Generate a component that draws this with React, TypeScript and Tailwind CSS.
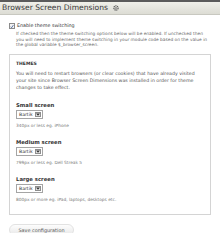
import React from "react";

function ThemeSelect() {
  return (
    <div className="mt-[2px] flex h-[9px] w-[27px] items-stretch border border-[#a5a5a5] bg-white">
      <span className="flex-1 pl-[2px] text-[4.6px] leading-[7px] text-[#333]">Bartik</span>
      <span className="m-[1px] flex w-[6px] items-center justify-center border border-[#8e8e8e] bg-[#e6e6e6]">
        <svg width="4" height="3" viewBox="0 0 4 3">
          <path d="M0 0.5 L4 0.5 L2 2.8 Z" fill="#333" />
        </svg>
      </span>
    </div>
  );
}

function ScreenField({ label, hint }: { label: string; hint: string }) {
  return (
    <div className="mt-[11px] first:mt-[9px]">
      <p className="text-[5.3px] font-bold leading-[6px] text-[#333]">{label}</p>
      <ThemeSelect />
      <p className="mt-[4px] text-[4.3px] leading-[5px] text-[#7a7a7a]">{hint}</p>
    </div>
  );
}

export default function App() {
  return (
    <div className="h-[233px] w-[220px] overflow-hidden bg-white font-['DejaVu_Sans',sans-serif]">
      <header className="flex h-[15px] items-center gap-[5px] border-t-[2px] border-b border-t-[#5b5b5b] border-b-[#c8c8c0] bg-gradient-to-b from-[#f0f0ea] to-[#dcdcd4] pl-[2px]">
        <h1 className="text-[7.6px] leading-[10px] text-[#3a3a3a]">Browser Screen Dimensions</h1>
        <svg width="6" height="6" viewBox="0 0 12 12">
          <circle cx="6" cy="6" r="4.2" fill="none" stroke="#555" strokeWidth="2.4" strokeDasharray="2.2 1.1" />
          <circle cx="6" cy="6" r="1.6" fill="#555" />
        </svg>
      </header>

      <div className="px-[9px] pt-[8px]">
        <label className="flex items-center gap-[2px]">
          <span className="flex h-[6px] w-[6px] items-center justify-center border border-[#8b8b8b] bg-[#f4f4f4]">
            <svg width="5" height="5" viewBox="0 0 10 10">
              <path d="M1.5 5.5 L4 8 L8.5 1.5" fill="none" stroke="#2b4a8a" strokeWidth="1.8" />
            </svg>
          </span>
          <span className="text-[4.8px] leading-[6px] text-[#333]">Enable theme switching</span>
        </label>
        <p className="mt-[2px] pl-[7px] text-[4.35px] leading-[5.5px] text-[#6a6a6a]">
          If checked then the theme switching options below will be enabled. If unchecked then you will need to
          implement theme switching in your module code based on the value in the global variable $_browser_screen.
        </p>

        <fieldset className="mt-[6px] w-[202px] border border-[#d4d4d4] px-[6px] pb-[12px] pt-[6px]">
          <p className="text-[4.5px] font-bold leading-[6px] text-[#333]">THEMES</p>
          <p className="mt-[3px] text-[4.7px] leading-[7px] text-[#555]">
            You will need to restart browsers (or clear cookies) that have already visited your site since Browser
            Screen Dimensions was installed in order for theme changes to take effect.
          </p>
          <ScreenField label="Small screen" hint="340px or less eg. iPhone" />
          <ScreenField label="Medium screen" hint="799px or less eg. Dell Streak 5" />
          <ScreenField label="Large screen" hint="800px or more eg. iPad, laptops, desktops etc." />
        </fieldset>

        <button className="mt-[8px] h-[12px] w-[65px] rounded-full border border-[#e2e2e2] bg-gradient-to-b from-[#fdfdfd] to-[#e8e8e8] text-[4.9px] leading-[10px] text-[#5a5a5a]">
          Save configuration
        </button>
      </div>
    </div>
  );
}
